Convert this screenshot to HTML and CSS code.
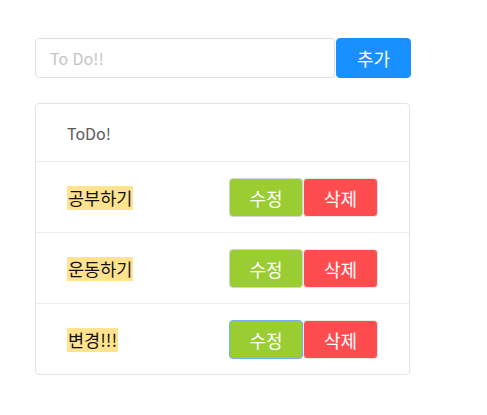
FILE: index.html
```html
<!DOCTYPE html>
<html lang="ko">
<head>
<meta charset="utf-8">
<link rel="stylesheet" href="styles.css">
</head>
<body>
<div class="app">
  <form class="add-form">
    <input class="add-input" type="text" placeholder="To Do!!">
    <button class="btn btn-add" type="button">추가</button>
  </form>
  <div class="card">
    <div class="card-head">ToDo!</div>
    <div class="row">
      <span class="item">공부하기</span>
      <div class="actions"><button class="btn btn-edit">수정</button><button class="btn btn-del">삭제</button></div>
    </div>
    <div class="row">
      <span class="item">운동하기</span>
      <div class="actions"><button class="btn btn-edit">수정</button><button class="btn btn-del">삭제</button></div>
    </div>
    <div class="row last">
      <span class="item">변경!!!</span>
      <div class="actions"><button class="btn btn-edit focused">수정</button><button class="btn btn-del">삭제</button></div>
    </div>
  </div>
</div>
</body>
</html>
```
FILE: styles.css
```css
* { box-sizing: border-box; }
body {
  margin: 0;
  font-family: "Noto Sans CJK KR", "Noto Sans", sans-serif;
  font-size: 16px;
  background: #fff;
}
.app {
  width: 376px;
  margin: 38px 0 0 35px;
}
.add-form {
  display: flex;
  margin: 0;
}
.add-input {
  flex: 1;
  height: 40px;
  border: 1px solid #e0e0e0;
  border-radius: 4px;
  padding: 0 14px;
  font-family: inherit;
  font-size: 16px;
  color: #333;
  outline: none;
}
.add-input::placeholder { color: #c4c4c4; }
.btn {
  font-family: inherit;
  font-size: 18px;
  color: #fff;
  border-radius: 4px;
  cursor: pointer;
  padding: 0;
}
.btn-add {
  width: 75px;
  height: 40px;
  margin-left: 1px;
  background: #1890ff;
  border: 1px solid #1890ff;
}
.card {
  margin-top: 25px;
  width: 375px;
  border: 1px solid #e3e3e3;
  border-radius: 4px;
}
.card-head {
  height: 58px;
  padding-left: 31px;
  display: flex;
  align-items: center;
  color: #595959;
  border-bottom: 1px solid #ececec;
}
.row {
  height: 71px;
  padding: 0 31px;
  display: flex;
  align-items: center;
  justify-content: space-between;
  border-bottom: 1px solid #ececec;
}
.row.last { border-bottom: none; height: 70px; }
.item {
  background: #ffe38f;
  color: #111;
  font-size: 17.5px;
  line-height: 24px;
  padding: 0 1px;
  margin-top: 1px;
}
.actions { display: flex; }
.btn-edit, .btn-del {
  height: 39px;
  margin-top: 1px;
}
.btn-edit {
  width: 74px;
  background: #9acd32;
  border: 1px solid #d4d4d4;
}
.btn-edit.focused { border-color: #6fb3f0; }
.btn-del {
  width: 75px;
  background: #ff4d4f;
  border: 1px solid #e8e8e8;
}
```
